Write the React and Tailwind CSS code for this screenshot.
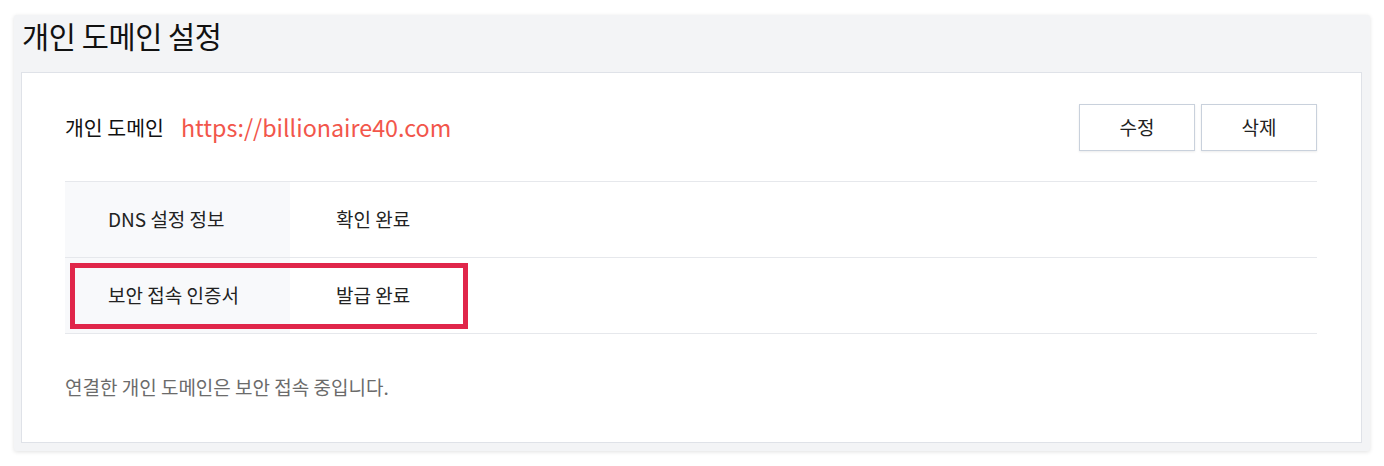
export default function App() {
  const font = { fontFamily: '"Noto Sans CJK KR", "Noto Sans", sans-serif' };
  return (
    <div className="w-[1384px] h-[466px] bg-white pt-[15px] pl-[14px]" style={font}>
      <div className="w-[1356px] h-[436px] bg-[#f3f4f6] rounded-[3px] shadow-[0_1px_4px_rgba(0,0,0,0.12)] pl-[7px] pr-[8px] pb-[8px] flex flex-col">
        <div className="h-[57px] flex items-start pt-[6px] pl-[1px]">
          <h1 className="text-[29.5px] leading-none text-[#111] tracking-[-0.4px]">개인 도메인 설정</h1>
        </div>
        <div className="flex-1 bg-white border border-[#dfe2e8] pl-[43px] pr-[44px] pt-[31px]">
          <div className="flex items-center justify-between h-[47px]">
            <div className="flex items-center">
              <span className="text-[20.5px] text-[#111]">개인 도메인</span>
              <span className="ml-[17px] text-[23.3px] text-[#f2564b]">https://billionaire40.com</span>
            </div>
            <div className="flex gap-[6px]">
              <button className="w-[116px] h-[47px] border border-[#c9d1dc] bg-white shadow-[0_1px_2px_rgba(0,0,0,0.08)] text-[19px] text-[#222]">수정</button>
              <button className="w-[116px] h-[47px] border border-[#c9d1dc] bg-white shadow-[0_1px_2px_rgba(0,0,0,0.08)] text-[19px] text-[#222]">삭제</button>
            </div>
          </div>
          <div className="mt-[30px] border-t border-[#e6e8ec] relative">
            <div className="flex h-[76px] border-b border-[#e6e8ec]">
              <div className="w-[225px] bg-[#f8f9fb] flex items-center pl-[43px] text-[19px] text-[#222]">DNS 설정 정보</div>
              <div className="flex items-center pl-[46px] text-[19px] text-[#222]">확인 완료</div>
            </div>
            <div className="flex h-[76px] border-b border-[#e6e8ec]">
              <div className="w-[225px] bg-[#f8f9fb] flex items-center pl-[43px] text-[19px] text-[#222]">보안 접속 인증서</div>
              <div className="flex items-center pl-[46px] text-[19px] text-[#222]">발급 완료</div>
            </div>
            <div className="absolute left-[5px] top-[81px] w-[398px] h-[66px] border-[5px] border-[#e0264a]"></div>
          </div>
          <p className="mt-[39px] text-[19px] text-[#6b6b6b]">연결한 개인 도메인은 보안 접속 중입니다.</p>
        </div>
      </div>
    </div>
  );
}
